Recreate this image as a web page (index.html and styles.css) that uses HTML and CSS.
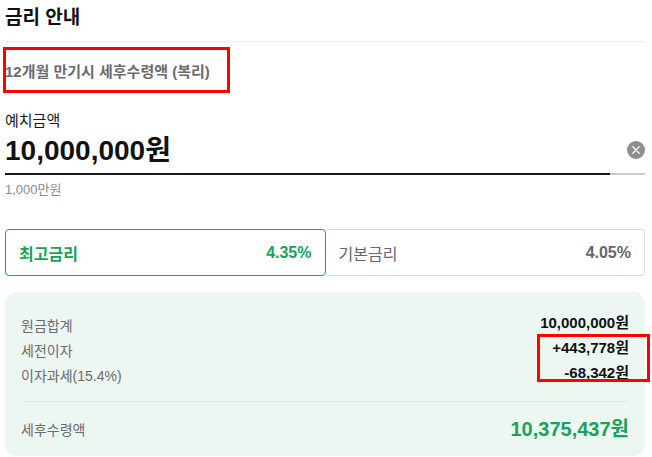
FILE: index.html
```html
<!DOCTYPE html>
<html lang="ko">
<head>
<meta charset="utf-8">
<title>금리 안내</title>
<link rel="stylesheet" href="styles.css">
</head>
<body>
<div class="page">
  <header class="head">
    <h1 class="title">금리 안내</h1>
  </header>

  <div class="subtitle">
    12개월 만기시 세후수령액 (복리)
    <span class="mark mark-sub"></span>
  </div>

  <section class="deposit">
    <div class="label">예치금액</div>
    <div class="input-row">
      <div class="amount">10,000,000원</div>
      <div class="clear-cell">
        <span class="clear" aria-label="지우기">
          <svg width="18" height="18" viewBox="0 0 18 18">
            <circle cx="9" cy="9" r="9" fill="#8f8f8f"/>
            <path d="M5.8 5.8 L12.2 12.2 M12.2 5.8 L5.8 12.2" stroke="#fff" stroke-width="1.3" stroke-linecap="round"/>
          </svg>
        </span>
      </div>
    </div>
    <div class="hint">1,000만원</div>
  </section>

  <div class="tabs">
    <div class="tab active"><span class="tab-name">최고금리</span><span class="tab-rate">4.35%</span></div>
    <div class="tab"><span class="tab-name">기본금리</span><span class="tab-rate">4.05%</span></div>
  </div>

  <section class="summary">
    <div class="row"><span class="k">원금합계</span><span class="v">10,000,000원</span></div>
    <div class="row"><span class="k">세전이자</span><span class="v">+443,778원</span></div>
    <div class="row"><span class="k">이자과세(15.4%)</span><span class="v">-68,342원</span></div>
    <div class="sep"></div>
    <div class="row total"><span class="k">세후수령액</span><span class="v">10,375,437원</span></div>
    <span class="mark mark-vals"></span>
  </section>
</div>
</body>
</html>
```

FILE: styles.css
```css
* { box-sizing: border-box; }
html, body { margin: 0; padding: 0; background: #fff; }
body {
  font-family: "Liberation Sans", "Noto Sans CJK KR", sans-serif;
  color: #111;
  overflow: hidden;
  height: 457px;
}
.page {
  padding: 0 7px 0 5px;
}
.head {
  padding-top: 4px;
  padding-bottom: 10px;
  border-bottom: 1px solid #ececec;
}
.title {
  margin: 0;
  font-size: 19px;
  line-height: 27px;
  font-weight: 700;
  color: #111;
}
.subtitle {
  position: relative;
  margin-top: 20px;
  font-size: 15px;
  line-height: 20px;
  font-weight: 700;
  color: #6b6b6b;
}
.mark {
  position: absolute;
  border: 3px solid #f00;
  pointer-events: none;
}
.mark-sub {
  left: -2px;
  top: -15px;
  width: 227px;
  height: 46px;
}
.deposit {
  margin-top: 29px;
}
.label {
  font-size: 15px;
  line-height: 20px;
  color: #1a1a1a;
}
.input-row {
  display: flex;
  align-items: stretch;
}
.amount {
  flex: 1;
  font-size: 28px;
  line-height: 40px;
  font-weight: 700;
  color: #111;
  border-bottom: 2px solid #1b1b1f;
  padding-bottom: 2px;
}
.clear-cell {
  width: 35px;
  display: flex;
  justify-content: flex-end;
  align-items: center;
  padding-bottom: 4px;
  border-bottom: 2px solid #c9c9cc;
}
.clear {
  display: block;
  width: 18px;
  height: 18px;
}
.clear svg { display: block; }
.hint {
  margin-top: 7px;
  font-size: 13px;
  line-height: 16px;
  color: #8a8a8a;
}
.tabs {
  margin-top: 31px;
  display: flex;
}
.tab {
  flex: 1;
  height: 47px;
  display: flex;
  justify-content: space-between;
  align-items: center;
  padding: 0 13px 0 13px;
  border: 1px solid #dcdcdc;
  border-left: none;
  border-radius: 0 4px 4px 0;
  font-size: 16px;
  color: #666;
}
.tab.active {
  border: 1px solid #1ea55e;
  border-radius: 4px;
  color: #17a35a;
}
.tab-name { font-weight: 400; }
.tab.active .tab-name { font-weight: 700; }
.tab-rate { font-weight: 700; }
.summary {
  position: relative;
  margin-top: 16px;
  background: #edf7f1;
  border-radius: 12px;
  padding: 20px 16px 12px 16px;
}
.row {
  display: flex;
  justify-content: space-between;
  align-items: center;
  height: 25px;
}
.row .k {
  font-size: 14px;
  color: #6b6b6b;
}
.row .v {
  font-size: 15px;
  line-height: 18px;
  padding-bottom: 3px;
  font-weight: 700;
  color: #111;
}
.sep {
  margin-top: 14px;
  border-top: 1px solid #dfeae3;
}
.row.total {
  height: 30px;
  margin-top: 12px;
}
.row.total .v {
  font-size: 20px;
  line-height: 24px;
  padding-bottom: 0;
  color: #18a35c;
}
.mark-vals {
  left: 532px;
  top: 42px;
  width: 113px;
  height: 48px;
}
```
